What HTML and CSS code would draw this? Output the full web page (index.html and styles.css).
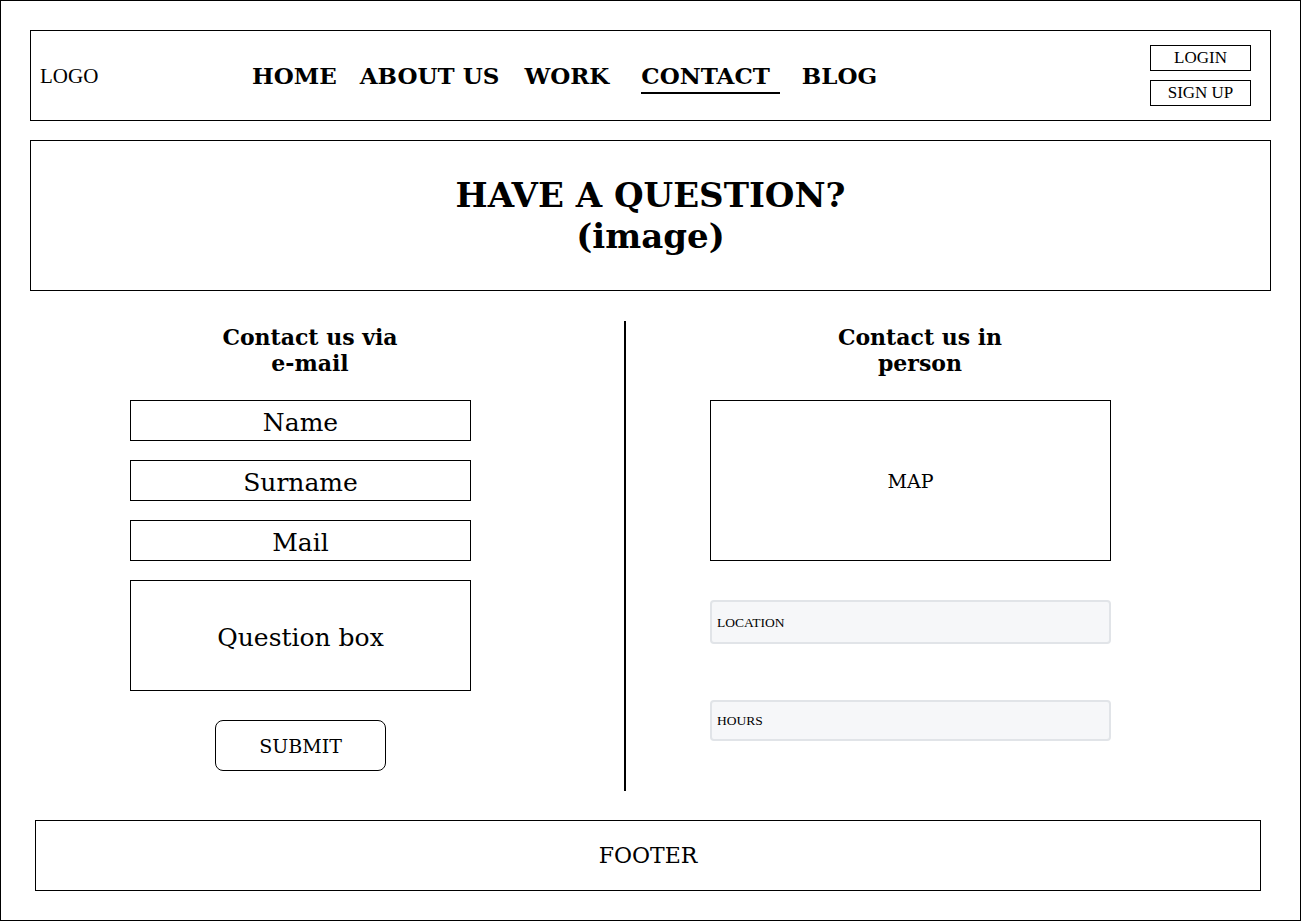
FILE: index.html
```html
<!DOCTYPE html>
<html lang="en">
<head>
<meta charset="utf-8">
<title>Contact</title>
<link rel="stylesheet" href="styles.css">
</head>
<body>
<div class="frame">
  <header class="topbar">
    <div class="logo">LOGO</div>
    <nav class="nav">
      <a class="nav-item">HOME</a>
      <a class="nav-item">ABOUT US</a>
      <a class="nav-item work">WORK</a>
      <a class="nav-item active">CONTACT</a>
      <a class="nav-item blog">BLOG</a>
    </nav>
    <div class="auth">
      <div class="auth-btn">LOGIN</div>
      <div class="auth-btn">SIGN UP</div>
    </div>
  </header>

  <section class="hero">
    <h1 class="hero-title">HAVE A QUESTION?<br>(image)</h1>
  </section>

  <main class="main">
    <div class="col-left">
      <h2 class="col-heading">Contact us via<br>e-mail</h2>
      <div class="form">
        <div class="field">Name</div>
        <div class="field">Surname</div>
        <div class="field">Mail</div>
        <div class="field question">Question box</div>
        <div class="submit">SUBMIT</div>
      </div>
    </div>
    <div class="divider"></div>
    <div class="col-right">
      <h2 class="col-heading wide">Contact us in<br>person</h2>
      <div class="map">MAP</div>
      <div class="info location">LOCATION</div>
      <div class="info hours">HOURS</div>
    </div>
  </main>

  <footer class="footer">FOOTER</footer>
</div>
</body>
</html>
```
FILE: styles.css
```css
html, body {
  margin: 0;
  padding: 0;
  background: #fff;
}
body {
  font-family: "DejaVu Serif", serif;
  color: #000;
}
.frame {
  width: 1301px;
  height: 921px;
  box-sizing: border-box;
  border: 1px solid #000;
  padding: 29px 29px 0 29px;
}
.topbar {
  height: 91px;
  box-sizing: border-box;
  border: 1px solid #000;
  display: flex;
  align-items: flex-start;
  padding: 0 19px 0 9px;
}
.logo {
  width: 212px;
  font-family: "Liberation Serif", serif;
  font-size: 21px;
  line-height: 24px;
  margin-top: 33px;
}
.nav {
  display: flex;
  align-items: flex-start;
  gap: 23px;
  font-weight: bold;
  font-size: 23px;
  margin-top: 31px;
}
.nav-item {
  color: #000;
  text-decoration: none;
  line-height: 28px;
}
.nav-item.work {
  margin-left: 2px;
}
.nav-item.active {
  margin-left: 9px;
  padding-right: 10px;
  padding-bottom: 2px;
  border-bottom: 2px solid #000;
}
.nav-item.blog {
  margin-left: -1px;
}
.auth {
  margin-left: auto;
  margin-top: 14px;
  display: flex;
  flex-direction: column;
  gap: 9px;
}
.auth-btn {
  width: 101px;
  height: 26px;
  box-sizing: border-box;
  border: 1px solid #000;
  display: flex;
  align-items: center;
  justify-content: center;
  font-family: "Liberation Serif", serif;
  font-size: 17px;
}
.hero {
  margin-top: 19px;
  height: 151px;
  box-sizing: border-box;
  border: 1px solid #000;
  display: flex;
  align-items: center;
  justify-content: center;
}
.hero-title {
  margin: 0;
  text-align: center;
  font-size: 34px;
  line-height: 41px;
  font-weight: bold;
}
.main {
  display: flex;
  padding-top: 30px;
}
.col-left {
  padding-left: 100px;
  width: 360px;
}
.col-heading {
  margin: 3px 0 0 0;
  width: 360px;
  text-align: center;
  font-size: 22px;
  line-height: 26px;
  font-weight: bold;
}
.col-heading.wide {
  width: 420px;
}
.form {
  width: 341px;
  margin-top: 24px;
  display: flex;
  flex-direction: column;
  gap: 19px;
}
.field {
  height: 41px;
  box-sizing: border-box;
  border: 1px solid #000;
  display: flex;
  align-items: center;
  justify-content: center;
  font-size: 25px;
  padding-top: 3px;
}
.field.question {
  height: 111px;
}
.submit {
  align-self: center;
  width: 171px;
  height: 51px;
  box-sizing: border-box;
  border: 1px solid #000;
  border-radius: 8px;
  display: flex;
  align-items: center;
  justify-content: center;
  font-size: 19px;
  margin-top: 10px;
}
.divider {
  margin-left: 134px;
  width: 2px;
  height: 470px;
  background: #000;
}
.col-right {
  margin-left: 84px;
}
.map {
  width: 401px;
  height: 161px;
  box-sizing: border-box;
  border: 1px solid #000;
  margin-top: 24px;
  display: flex;
  align-items: center;
  justify-content: center;
  font-size: 19px;
}
.info {
  width: 401px;
  box-sizing: border-box;
  border: 2px solid #e1e4e8;
  border-radius: 4px;
  background: #f6f7f9;
  display: flex;
  align-items: center;
  padding-left: 5px;
  padding-top: 1px;
  font-family: "Liberation Serif", serif;
  font-size: 13.5px;
}
.info.location {
  margin-top: 39px;
  height: 44px;
}
.info.hours {
  margin-top: 56px;
  height: 41px;
}
.footer {
  margin: 29px 10px 0 5px;
  height: 71px;
  box-sizing: border-box;
  border: 1px solid #000;
  display: flex;
  align-items: center;
  justify-content: center;
  font-size: 22px;
}
```
